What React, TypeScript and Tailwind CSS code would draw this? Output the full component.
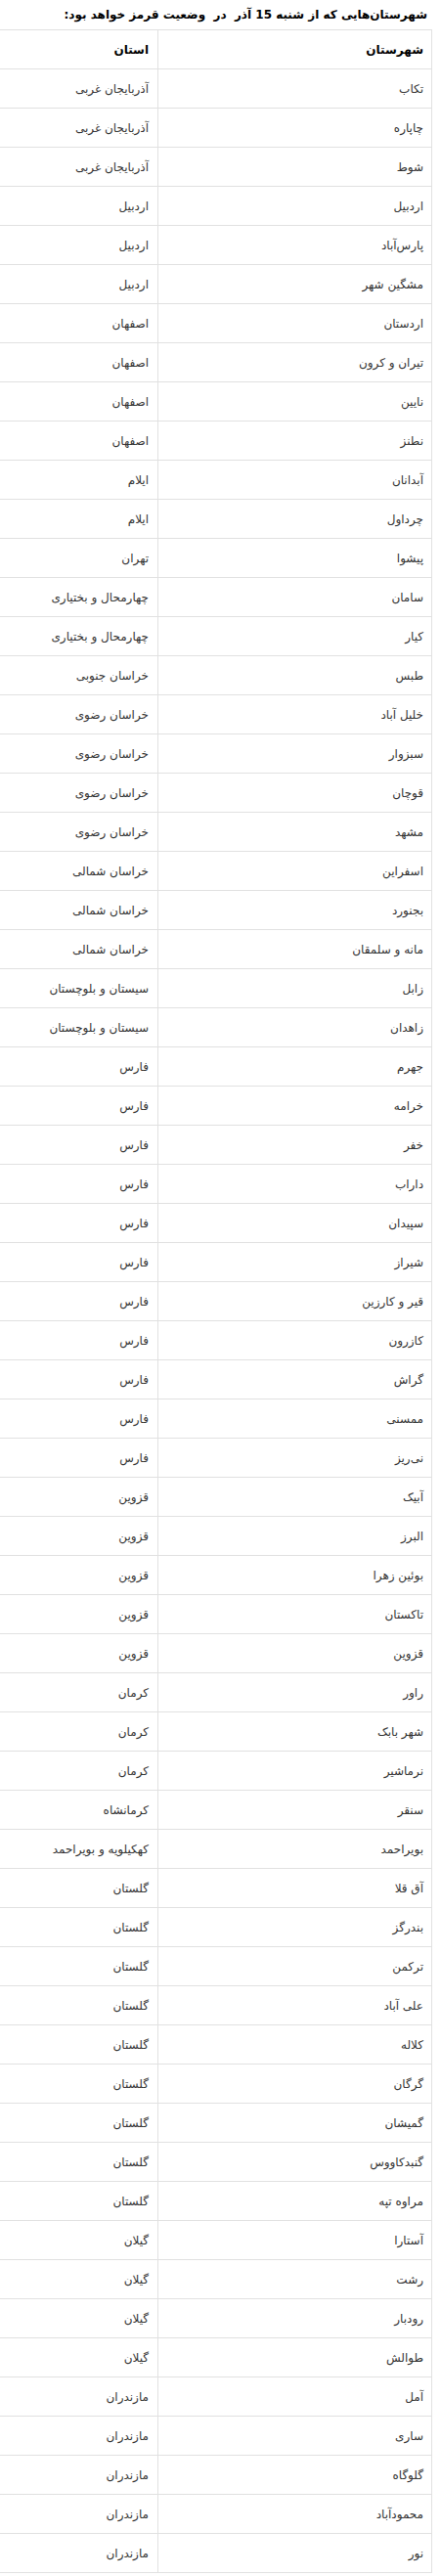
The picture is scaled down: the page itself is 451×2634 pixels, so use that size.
const rows: [string, string][] = [
  ["تکاب", "آذربایجان غربی"],
  ["چاپاره", "آذربایجان غربی"],
  ["شوط", "آذربایجان غربی"],
  ["اردبیل", "اردبیل"],
  ["پارس‌آباد", "اردبیل"],
  ["مشگین شهر", "اردبیل"],
  ["اردستان", "اصفهان"],
  ["تیران و کرون", "اصفهان"],
  ["نایین", "اصفهان"],
  ["نطنز", "اصفهان"],
  ["آبدانان", "ایلام"],
  ["چرداول", "ایلام"],
  ["پیشوا", "تهران"],
  ["سامان", "چهارمحال و بختیاری"],
  ["کیار", "چهارمحال و بختیاری"],
  ["طبس", "خراسان جنوبی"],
  ["خلیل آباد", "خراسان رضوی"],
  ["سبزوار", "خراسان رضوی"],
  ["قوچان", "خراسان رضوی"],
  ["مشهد", "خراسان رضوی"],
  ["اسفراین", "خراسان شمالی"],
  ["بجنورد", "خراسان شمالی"],
  ["مانه و سلمقان", "خراسان شمالی"],
  ["زابل", "سیستان و بلوچستان"],
  ["زاهدان", "سیستان و بلوچستان"],
  ["جهرم", "فارس"],
  ["خرامه", "فارس"],
  ["خفر", "فارس"],
  ["داراب", "فارس"],
  ["سپیدان", "فارس"],
  ["شیراز", "فارس"],
  ["قیر و کارزین", "فارس"],
  ["کازرون", "فارس"],
  ["گراش", "فارس"],
  ["ممسنی", "فارس"],
  ["نی‌ریز", "فارس"],
  ["آبیک", "قزوین"],
  ["البرز", "قزوین"],
  ["بوئین زهرا", "قزوین"],
  ["تاکستان", "قزوین"],
  ["قزوین", "قزوین"],
  ["راور", "کرمان"],
  ["شهر بابک", "کرمان"],
  ["نرماشیر", "کرمان"],
  ["سنقر", "کرمانشاه"],
  ["بویراحمد", "کهکیلویه و بویراحمد"],
  ["آق قلا", "گلستان"],
  ["بندرگز", "گلستان"],
  ["ترکمن", "گلستان"],
  ["علی آباد", "گلستان"],
  ["کلاله", "گلستان"],
  ["گرگان", "گلستان"],
  ["گمیشان", "گلستان"],
  ["گنبدکاووس", "گلستان"],
  ["مراوه تپه", "گلستان"],
  ["آستارا", "گیلان"],
  ["رشت", "گیلان"],
  ["رودبار", "گیلان"],
  ["طوالش", "گیلان"],
  ["آمل", "مازندران"],
  ["ساری", "مازندران"],
  ["گلوگاه", "مازندران"],
  ["محمودآباد", "مازندران"],
  ["نور", "مازندران"],
];

export default function App() {
  return (
    <div
      dir="rtl"
      className="w-[451px] bg-white text-[#333] font-['DejaVu_Sans',Tahoma,sans-serif]"
    >
      {/* Title */}
      <div className="h-[30px] pr-[14px] flex items-center text-[12px] font-bold text-black leading-none">
        شهرستان‌هایی که از شنبه 15 آذر&nbsp; در&nbsp; وضعیت قرمز خواهد بود:
      </div>

      {/* Table */}
      <div className="mr-[9px]">
        <table className="w-full border-collapse text-[12px]">
          <thead>
            <tr className="h-[40px]">
              <th className="w-[280px] border border-l-0 border-[#e1e1e1] pr-[8px] text-right font-bold text-black">
                شهرستان
              </th>
              <th className="border border-l-0 border-[#e1e1e1] pr-[9px] text-right font-bold text-black">
                استان
              </th>
            </tr>
          </thead>
          <tbody>
            {rows.map(([city, province], i) => (
              <tr key={i} className="h-[40px]">
                <td className="border border-l-0 border-[#e1e1e1] pr-[8px] text-right">{city}</td>
                <td className="border border-l-0 border-[#e1e1e1] pr-[9px] text-right">{province}</td>
              </tr>
            ))}
          </tbody>
        </table>
      </div>
    </div>
  );
}
